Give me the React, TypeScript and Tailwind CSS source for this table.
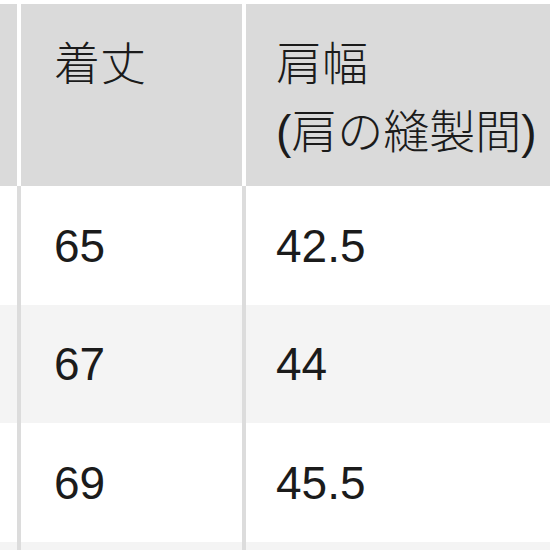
const FONT = { fontFamily: '"Liberation Sans", "Noto Sans CJK JP", sans-serif' };

const ROWS = [
  { length: "65", shoulder: "42.5", bg: "bg-white" },
  { length: "67", shoulder: "44", bg: "bg-[#f4f4f4]" },
  { length: "69", shoulder: "45.5", bg: "bg-white" },
  { length: "", shoulder: "", bg: "bg-[#f4f4f4]" },
];

function Divider({ header }: { header?: boolean }) {
  return <div className={`w-[4px] shrink-0 self-stretch ${header ? "bg-white" : "bg-[#dcdcdc]"}`} />;
}

export default function App() {
  return (
    <div className="w-[550px] h-[550px] overflow-hidden bg-white pt-[4px] text-[46px] leading-[68px] font-light text-[#1b1b1b]" style={FONT}>
      <div className="flex h-[182px] bg-[#dadada]">
        <div className="w-[17px] shrink-0" />
        <Divider header />
        <div className="w-[221px] shrink-0 pl-[33px] pt-[26px]">着丈</div>
        <Divider header />
        <div className="flex-1 pl-[30px] pt-[26px]">
          <div>肩幅</div>
          <div>(肩の縫製間)</div>
        </div>
      </div>
      {ROWS.map((r, i) => (
        <div key={i} className={`flex ${i === 1 ? "h-[118px]" : "h-[119px]"} ${r.bg}`}>
          <div className="w-[17px] shrink-0" />
          <Divider />
          <div className="w-[221px] shrink-0 pl-[33px] flex items-center">{r.length}</div>
          <Divider />
          <div className="flex-1 pl-[30px] flex items-center">{r.shoulder}</div>
        </div>
      ))}
    </div>
  );
}
